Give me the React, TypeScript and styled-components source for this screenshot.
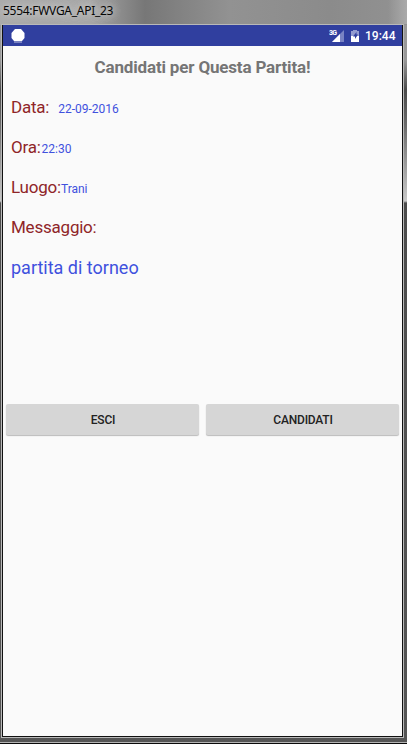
import React from "react";
import styled, { createGlobalStyle } from "styled-components";

const GlobalStyle = createGlobalStyle`
  * { box-sizing: border-box; }
  html, body { margin: 0; padding: 0; overflow: hidden; }
  body { font-family: Roboto, sans-serif; }
`;

const EmulatorWindow = styled.div`
  width: 407px;
  height: 744px;
  display: flex;
  flex-direction: column;
  padding: 0 3px 0 1px;
  background:
    linear-gradient(#0a0a0a, #0a0a0a) 0 743px / 407px 1px no-repeat,
    linear-gradient(#b4b4b4, #b4b4b4) 0 742px / 407px 1px no-repeat,
    linear-gradient(90deg, transparent 388px, #aaa 407px) 0 0 / 407px 24px no-repeat,
    linear-gradient(90deg, #aaa 0, #a6a6a6 90px, #777 145px, #929292 230px, #8b8b8b 330px, #929292 407px) 0 0 / 407px 25px no-repeat,
    linear-gradient(#999 0, #999 60px, #4b4b4b 90px, #6b6b6b 125px, #c9c9c9 201px, #4c4c4c 203px, #555 100%);
`;

const TitleBar = styled.header`
  height: 24px;
  padding: 3px 0 0 2px;
  font: 12px/16px "Noto Sans", sans-serif;
  letter-spacing: -0.28px;
  color: #050505;
  white-space: nowrap;
  text-shadow: 0 0 8px #ddd, 0 0 8px #ccc;
`;

const Bezel = styled.div`
  width: 403px;
  height: 714px;
  border: 1px solid #b9b9b9;
  background: #111;
  padding: 0 1px 1px;
`;

const Screen = styled.main`
  height: 711px;
  background: #fafafa;
`;

const StatusBar = styled.div`
  height: 21px;
  background: #303f9f;
  display: flex;
  align-items: center;
  padding: 0 6px 0 8px;
  color: #fff;
  font-size: 12px;
  font-weight: 500;
`;

const StatusIcons = styled.div`
  display: flex;
  align-items: center;
  margin-left: auto;
`;

const Clock = styled.span`
  width: 31px;
  margin-left: 5px;
  padding-top: 1px;
  line-height: 14px;
  white-space: nowrap;
`;

const Heading = styled.h1`
  margin: 0;
  height: 42px;
  padding-top: 11px;
  text-align: center;
  font-size: 17px;
  line-height: 20px;
  font-weight: 700;
  letter-spacing: -0.17px;
  color: #757575;
`;

const Field = styled.div`
  height: 40px;
  padding: 9px 8px 0;
  display: flex;
  align-items: baseline;
  line-height: 20px;
`;

const Label = styled.span`
  font-size: 17px;
  letter-spacing: -0.22px;
  color: #8f2528;
  white-space: pre;
`;

const Value = styled.span<{ $gap?: number }>`
  margin-left: ${({ $gap = 0 }) => $gap}px;
  font-size: 12px;
  color: #3f51de;
`;

const Message = styled.p`
  margin: 0;
  height: 156px;
  padding: 10px 8px 0;
  font-size: 18px;
  line-height: 20px;
  color: #3f51de;
`;

const Actions = styled.div`
  display: grid;
  grid-template-columns: 193px 193px;
  gap: 7px;
  padding-left: 3px;
`;

const Button = styled.button`
  height: 31px;
  border: 0;
  border-radius: 2px;
  background: #d6d6d6;
  box-shadow: 0 1px 1px #bbb;
  padding: 1px 0 0 1px;
  font: 500 12px/16px Roboto, sans-serif;
  letter-spacing: -0.2px;
  color: #222;
`;

const NotificationIcon = () => (
  <svg width="14" height="14" viewBox="0 0 14 14">
    <path d="M4 0h6l3.5 4v5L11 12H3L.5 9V4z" fill="#fff" />
    <path d="M3 13h8" stroke="#c3c7e2" />
  </svg>
);

const SignalIcon = () => (
  <svg width="16" height="14" viewBox="0 0 16 14">
    <path d="M15 1v12H3z" fill="#7983c3" />
    <path d="M11 5v8H3z" fill="#fff" />
    <text x="0" y="6" fontSize="7" fontWeight="700" fill="#fff" textLength="8">3G</text>
  </svg>
);

const BatteryIcon = () => (
  <svg width="10" height="14" viewBox="0 0 10 14">
    <path d="M3 1h4v1h2v11H1V2h2z" fill="#929bd0" />
    <path d="M1 7h8v6H1z" fill="#fff" />
    <path d="M6.5 3 3 7.5h2V10l3-4.5H6.5z" fill="#303f9f" />
  </svg>
);

const SignalSlot = styled.div`
  display: flex;
  margin-right: 5px;
`;

const fields = [
  { label: "Data:", value: "22-09-2016", gap: 9 },
  { label: "Ora:", value: "22:30", gap: 1 },
  { label: "Luogo:", value: "Trani" },
  { label: "Messaggio:", value: "" },
];

export default function App() {
  return (
    <>
      <GlobalStyle />
      <EmulatorWindow>
        <TitleBar>5554:FWVGA_API_23</TitleBar>
        <Bezel>
          <Screen>
            <StatusBar>
              <NotificationIcon />
              <StatusIcons>
                <SignalSlot><SignalIcon /></SignalSlot>
                <BatteryIcon />
                <Clock>19:44</Clock>
              </StatusIcons>
            </StatusBar>
            <Heading>Candidati per Questa Partita!</Heading>
            {fields.map(({ label, value, gap }) => (
              <Field key={label}>
                <Label>{label}</Label>
                {value && <Value $gap={gap}>{value}</Value>}
              </Field>
            ))}
            <Message>partita di torneo</Message>
            <Actions>
              <Button>ESCI</Button>
              <Button>CANDIDATI</Button>
            </Actions>
          </Screen>
        </Bezel>
      </EmulatorWindow>
    </>
  );
}
